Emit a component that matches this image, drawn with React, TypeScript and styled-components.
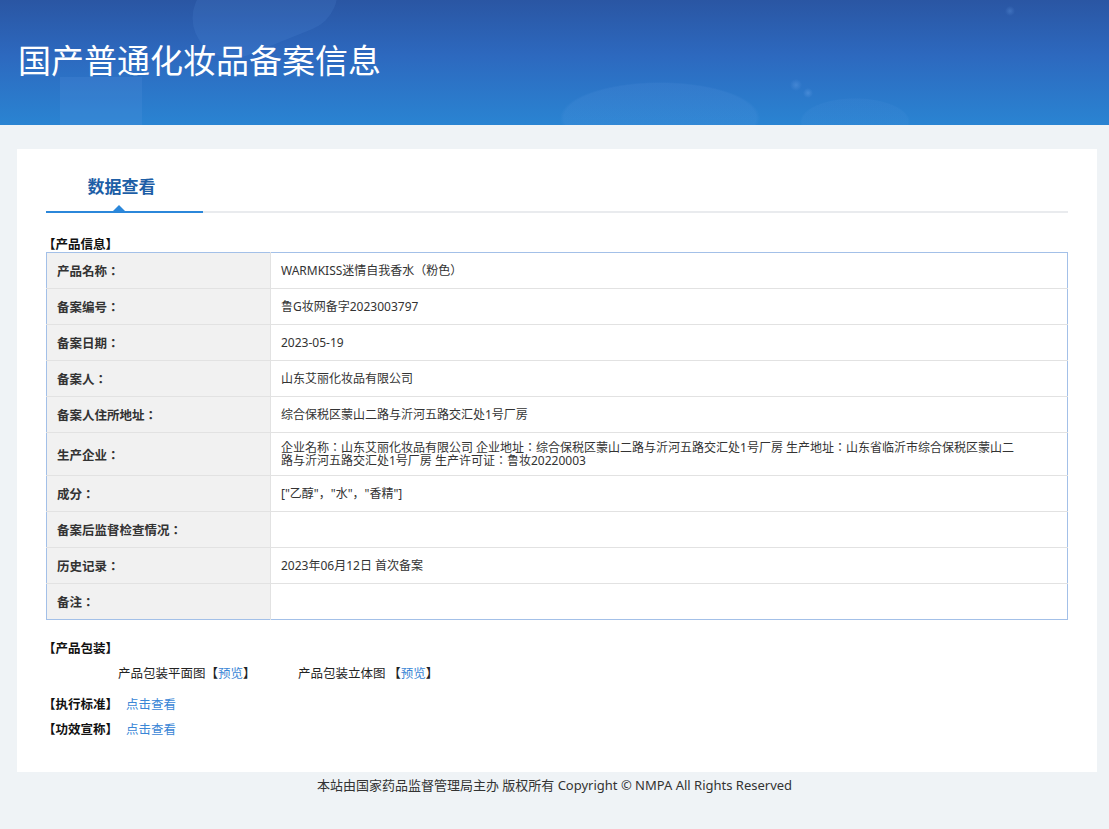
import React from "react";
import styled, { createGlobalStyle } from "styled-components";

const CJK = `"Noto Sans CJK JP", "Noto Sans CJK SC"`;

const Global = createGlobalStyle`
  html, body { margin: 0; padding: 0; background: #eff3f6; }
  body { font-family: "Noto Sans", ${CJK}, sans-serif; color: #333; }
  * { box-sizing: border-box; }
`;

const Header = styled.header`
  position: relative;
  height: 125px;
  overflow: hidden;
  padding: 37px 0 0 18px;
  background:
    radial-gradient(ellipse 100px 36px at 660px 118px, rgba(110, 165, 235, 0.12), rgba(110, 165, 235, 0.12) 96%, transparent 100%),
    radial-gradient(ellipse 55px 24px at 855px 122px, rgba(110, 165, 235, 0.08), rgba(110, 165, 235, 0.08) 96%, transparent 100%),
    radial-gradient(circle 5px at 1010px 11px, rgba(110, 165, 235, 0.3), transparent 100%),
    radial-gradient(circle 6px at 796px 85px, rgba(110, 165, 235, 0.35), transparent 100%),
    radial-gradient(circle 5px at 808px 93px, rgba(110, 165, 235, 0.4), transparent 100%),
    linear-gradient(180deg, #2a56a3 0%, #2d69bf 45%, #2a84d2 100%);
  &::before {
    content: "";
    position: absolute;
    left: 190px;
    top: -35px;
    width: 150px;
    height: 80px;
    border-radius: 40px;
    background: rgba(110, 165, 235, 0.12);
    transform: rotate(-22deg);
  }
  &::after {
    content: "";
    position: absolute;
    left: 60px;
    top: 77px;
    width: 82px;
    height: 60px;
    background: rgba(110, 165, 235, 0.14);
  }
`;

const Title = styled.h1`
  position: relative;
  z-index: 1;
  margin: 0;
  font-family: "Noto Sans CJK SC", sans-serif;
  font-weight: 400;
  font-size: 33px;
  line-height: 44px;
  color: #fff;
`;

const Card = styled.main`
  margin: 24px 12px 0 17px;
  background: #fff;
  padding: 0 29px 35px 29px;
`;

const TabBar = styled.div`
  display: flex;
  height: 64px;
  border-bottom: 2px solid #e9ebee;
`;

const Tab = styled.div`
  position: relative;
  width: 157px;
  display: flex;
  align-items: center;
  justify-content: center;
  padding: 10px 6px 0 0;
  margin-bottom: -2px;
  border-bottom: 2px solid #2b87da;
  font-family: "Noto Sans CJK SC", sans-serif;
  font-weight: 700;
  font-size: 17px;
  color: #1d5ea6;
  &::after {
    content: "";
    position: absolute;
    left: 67px;
    bottom: 0;
    border-left: 6px solid transparent;
    border-right: 6px solid transparent;
    border-bottom: 6px solid #2b87da;
  }
`;

const SectionTitle = styled.div<{ $mt: number }>`
  margin-top: ${(p) => p.$mt}px;
  margin-left: -3px;
  font-family: ${CJK}, sans-serif;
  font-weight: 700;
  font-size: 12.5px;
  line-height: 16px;
  color: #111;
`;

const Table = styled.table`
  width: 100%;
  border-collapse: collapse;
  border: 1px solid #a3c0e8;
  font-family: "Noto Sans", ${CJK}, sans-serif;
`;

const Row = styled.tr`
  & + & > td { border-top: 1px solid #e2e2e2; }
`;

const Label = styled.td`
  width: 224px;
  height: 36px;
  background: #f1f1f1;
  border-right: 1px solid #e2e2e2;
  padding: 0 10px;
  font-family: ${CJK}, sans-serif;
  font-weight: 700;
  font-size: 12.5px;
  color: #333;
`;

const Value = styled.td`
  padding: 8px 50px 8px 10px;
  font-size: 12px;
  line-height: 13px;
  color: #333;
`;

const PackRow = styled.div`
  display: flex;
  padding-left: 72px;
  margin-top: 8px;
  font-family: ${CJK}, sans-serif;
  font-size: 12.5px;
  line-height: 17px;
  color: #222;
`;

const PackItem = styled.span`
  width: 180px;
`;

const Link = styled.a`
  color: #3a86d6;
  text-decoration: none;
  font-weight: 400;
`;

const InfoList = styled.div`
  display: flex;
  flex-direction: column;
  gap: 8px;
  margin: 14px 0 0 -3px;
`;

const InfoLine = styled.div`
  display: flex;
  gap: 8px;
  font-family: ${CJK}, sans-serif;
  font-size: 12.5px;
  line-height: 17px;
`;

const Bold = styled.b`
  font-weight: 700;
  color: #111;
`;

const Footer = styled.footer`
  text-align: center;
  padding: 4px 0 40px;
  font-family: "Noto Sans", ${CJK}, sans-serif;
  font-size: 13px;
  line-height: 18px;
  color: #333;
`;

const rows: [string, string][] = [
  ["产品名称：", "WARMKISS迷情自我香水（粉色）"],
  ["备案编号：", "鲁G妆网备字2023003797"],
  ["备案日期：", "2023-05-19"],
  ["备案人：", "山东艾丽化妆品有限公司"],
  ["备案人住所地址：", "综合保税区蒙山二路与沂河五路交汇处1号厂房"],
  [
    "生产企业：",
    "企业名称：山东艾丽化妆品有限公司 企业地址：综合保税区蒙山二路与沂河五路交汇处1号厂房 生产地址：山东省临沂市综合保税区蒙山二路与沂河五路交汇处1号厂房 生产许可证：鲁妆20220003",
  ],
  ["成分：", "[\"乙醇\"，\"水\"，\"香精\"]"],
  ["备案后监督检查情况：", ""],
  ["历史记录：", "2023年06月12日 首次备案"],
  ["备注：", ""],
];

const links = ["【执行标准】", "【功效宣称】"];

export default function App() {
  return (
    <>
      <Global />
      <Header>
        <Title>国产普通化妆品备案信息</Title>
      </Header>
      <Card>
        <TabBar>
          <Tab>数据查看</Tab>
        </TabBar>
        <SectionTitle $mt={23}>【产品信息】</SectionTitle>
        <Table>
          <tbody>
            {rows.map(([k, v]) => (
              <Row key={k}>
                <Label>{k}</Label>
                <Value>{v}</Value>
              </Row>
            ))}
          </tbody>
        </Table>
        <SectionTitle $mt={20}>【产品包装】</SectionTitle>
        <PackRow>
          <PackItem>
            产品包装平面图【<Link href="#">预览</Link>】
          </PackItem>
          <PackItem>
            产品包装立体图 【<Link href="#">预览</Link>】
          </PackItem>
        </PackRow>
        <InfoList>
          {links.map((l) => (
            <InfoLine key={l}>
              <Bold>{l}</Bold>
              <Link href="#">点击查看</Link>
            </InfoLine>
          ))}
        </InfoList>
      </Card>
      <Footer>本站由国家药品监督管理局主办 版权所有 Copyright © NMPA All Rights Reserved</Footer>
    </>
  );
}
